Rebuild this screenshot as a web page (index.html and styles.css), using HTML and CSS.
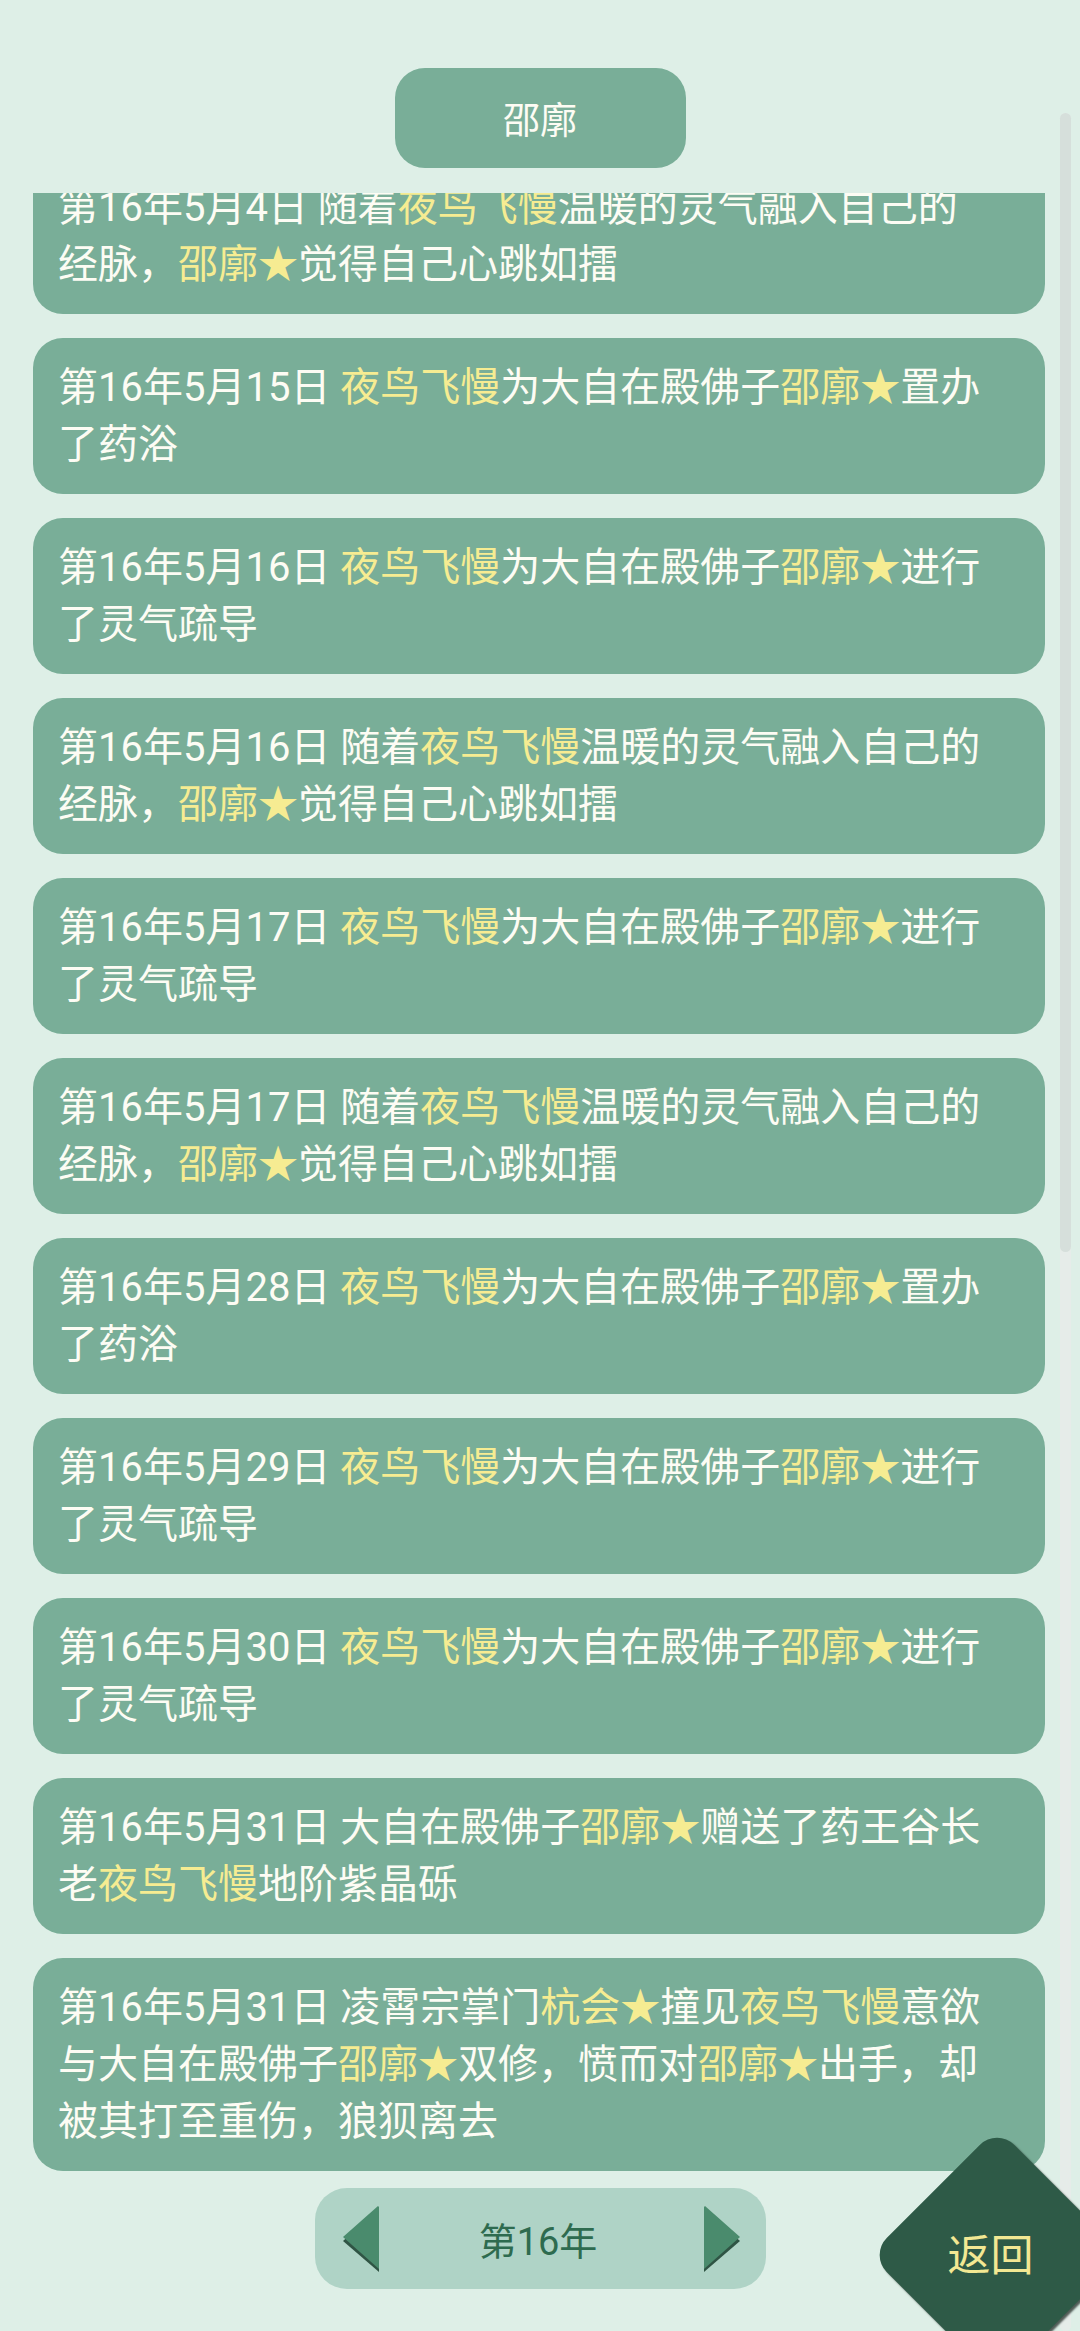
FILE: index.html
```html
<!DOCTYPE html>
<html lang="zh-CN">
<head>
<meta charset="utf-8">
<title>邵廓</title>
<link rel="stylesheet" href="styles.css">
</head>
<body>
<div class="page">
  <header class="header">
    <div class="title-pill">邵廓</div>
  </header>

  <div class="list-viewport">
    <div class="list">
      <div class="card">第16年5月4日 随着<span class="hl">夜鸟飞慢</span>温暖的灵气融入自己的经脉，<span class="hl">邵廓★</span>觉得自己心跳如擂</div>
      <div class="card">第16年5月15日 <span class="hl">夜鸟飞慢</span>为大自在殿佛子<span class="hl">邵廓★</span>置办了药浴</div>
      <div class="card">第16年5月16日 <span class="hl">夜鸟飞慢</span>为大自在殿佛子<span class="hl">邵廓★</span>进行了灵气疏导</div>
      <div class="card">第16年5月16日 随着<span class="hl">夜鸟飞慢</span>温暖的灵气融入自己的经脉，<span class="hl">邵廓★</span>觉得自己心跳如擂</div>
      <div class="card">第16年5月17日 <span class="hl">夜鸟飞慢</span>为大自在殿佛子<span class="hl">邵廓★</span>进行了灵气疏导</div>
      <div class="card">第16年5月17日 随着<span class="hl">夜鸟飞慢</span>温暖的灵气融入自己的经脉，<span class="hl">邵廓★</span>觉得自己心跳如擂</div>
      <div class="card">第16年5月28日 <span class="hl">夜鸟飞慢</span>为大自在殿佛子<span class="hl">邵廓★</span>置办了药浴</div>
      <div class="card">第16年5月29日 <span class="hl">夜鸟飞慢</span>为大自在殿佛子<span class="hl">邵廓★</span>进行了灵气疏导</div>
      <div class="card">第16年5月30日 <span class="hl">夜鸟飞慢</span>为大自在殿佛子<span class="hl">邵廓★</span>进行了灵气疏导</div>
      <div class="card">第16年5月31日 大自在殿佛子<span class="hl">邵廓★</span>赠送了药王谷长老<span class="hl">夜鸟飞慢</span>地阶紫晶砾</div>
      <div class="card">第16年5月31日 凌霄宗掌门<span class="hl">杭会★</span>撞见<span class="hl">夜鸟飞慢</span>意欲与大自在殿佛子<span class="hl">邵廓★</span>双修，愤而对<span class="hl">邵廓★</span>出手，却被其打至重伤，狼狈离去</div>
    </div>
  </div>

  <nav class="year-nav">
    <svg class="arrow" width="40" height="68" viewBox="0 0 40 68">
      <polygon points="38,4 38,67 2,36" fill="#2f5444"/>
      <polygon points="37,1 38,2 38,64 2,32" fill="#4a8b6d"/>
    </svg>
    <span class="year-label">第16年</span>
    <svg class="arrow" width="40" height="68" viewBox="0 0 40 68">
      <polygon points="2,4 2,67 38,36" fill="#2f5444"/>
      <polygon points="3,1 2,2 2,64 38,32" fill="#4a8b6d"/>
    </svg>
  </nav>
</div>

<div class="scrollbar"><div class="scrollbar-thumb"></div></div>

<div class="back-btn"><span class="back-label">返回</span></div>
</body>
</html>
```

FILE: styles.css
```css
html, body {
  margin: 0;
  padding: 0;
}

body {
  width: 1080px;
  height: 2331px;
  overflow: hidden;
  background: #deefe7;
  font-family: Roboto, "Noto Sans CJK SC", sans-serif;
  position: relative;
}

.page {
  display: flex;
  flex-direction: column;
  align-items: center;
}

.header {
  padding-top: 68px;
  display: flex;
  justify-content: center;
}

.title-pill {
  width: 291px;
  height: 100px;
  border-radius: 30px;
  background: #79ae98;
  color: #fdfcf4;
  font-size: 37px;
  display: flex;
  align-items: center;
  justify-content: center;
}

.list-viewport {
  margin-top: 25px;
  height: 1987px;
  width: 1080px;
  overflow: hidden;
  box-sizing: border-box;
  padding: 0 35px 0 33px;
}

.list {
  margin-top: -35px;
  display: flex;
  flex-direction: column;
  gap: 24px;
}

.card {
  background: #79ae98;
  border-radius: 30px;
  padding: 21px 57px 21px 25px;
  color: #fdfcf4;
  font-size: 40px;
  line-height: 57px;
}

.hl {
  color: #f6ec92;
}

.year-nav {
  margin-top: 8px;
  width: 451px;
  height: 101px;
  box-sizing: border-box;
  border-radius: 32px;
  background: #afd3c6;
  display: flex;
  align-items: center;
  justify-content: space-between;
  padding: 0 24px 0 26px;
}

.arrow {
  display: block;
}

.year-label {
  color: #2e6b4f;
  font-size: 38px;
  margin-right: 6px;
}

.scrollbar {
  position: absolute;
  left: 1060px;
  top: 113px;
  width: 11px;
  bottom: 0;
  background: #e6ece9;
  border-radius: 6px;
}

.scrollbar-thumb {
  height: 1139px;
  border-radius: 6px;
  background: #d6dfdb;
}

.back-btn {
  position: absolute;
  left: 907px;
  top: 2165px;
  width: 180px;
  height: 180px;
  display: flex;
  align-items: center;
  justify-content: center;
}

.back-btn::before {
  content: "";
  position: absolute;
  inset: 0;
  background: #2e5a47;
  border-radius: 24px;
  transform: rotate(45deg);
  box-shadow: 3px 0 2px rgba(20, 30, 25, 0.7);
}

.back-label {
  position: relative;
  color: #f3e893;
  font-size: 43px;
  margin-left: -13px;
  margin-top: -6px;
}
```
